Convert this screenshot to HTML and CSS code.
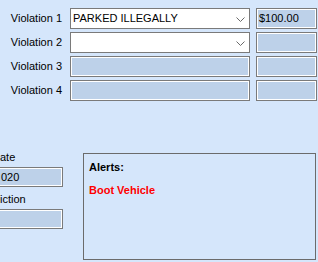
FILE: index.html
```html
<!DOCTYPE html>
<html>
<head>
<meta charset="utf-8">
<link rel="stylesheet" href="styles.css">
</head>
<body>
<div class="form">
  <div class="violations">
    <div class="row">
      <label class="lbl">Violation 1</label>
      <div class="combo"><span class="combo-text">PARKED ILLEGALLY</span>
        <svg class="chev" width="9" height="5" viewBox="0 0 9 5"><polyline points="0.5,0.5 4.5,4.5 8.5,0.5" fill="none" stroke="#6a6a6a" stroke-width="1"/></svg>
      </div>
      <div class="field amount">$100.00</div>
    </div>
    <div class="row">
      <label class="lbl">Violation 2</label>
      <div class="combo"><span class="combo-text"></span>
        <svg class="chev" width="9" height="5" viewBox="0 0 9 5"><polyline points="0.5,0.5 4.5,4.5 8.5,0.5" fill="none" stroke="#6a6a6a" stroke-width="1"/></svg>
      </div>
      <div class="field amount"></div>
    </div>
    <div class="row">
      <label class="lbl">Violation 3</label>
      <div class="field wide"></div>
      <div class="field amount"></div>
    </div>
    <div class="row">
      <label class="lbl">Violation 4</label>
      <div class="field wide"></div>
      <div class="field amount"></div>
    </div>
  </div>
  <div class="lower">
    <div class="left-col">
      <label class="side-lbl">ate</label>
      <div class="field side-field">020</div>
      <label class="side-lbl second">iction</label>
      <div class="field side-field"></div>
    </div>
    <div class="alerts">
      <div class="alerts-title">Alerts:</div>
      <div class="alert-item">Boot Vehicle</div>
    </div>
  </div>
</div>
</body>
</html>
```
FILE: styles.css
```css
html, body {
  margin: 0;
  padding: 0;
  background: #d5e6fb;
  overflow: hidden;
}
body {
  width: 318px;
  height: 262px;
  font-family: "Liberation Sans", Arial, sans-serif;
  font-size: 11px;
  color: #000;
}
.form {
  display: flex;
  flex-direction: column;
}
.violations {
  display: flex;
  flex-direction: column;
  gap: 3px;
  padding-top: 8px;
}
.row {
  display: flex;
  align-items: center;
  height: 21px;
}
.lbl {
  width: 62px;
  text-align: right;
  line-height: 13px;
  flex: none;
}
.combo {
  margin-left: 8px;
  width: 180px;
  height: 21px;
  box-sizing: border-box;
  border: 1px solid #7a7a7a;
  background: #fff;
  display: flex;
  align-items: center;
  padding-left: 2px;
  padding-right: 4px;
  flex: none;
}
.combo-text {
  flex: 1;
  line-height: 13px;
}
.chev {
  display: block;
  margin-top: 1px;
}
.field {
  height: 21px;
  box-sizing: border-box;
  border: 1px solid #7a7a7a;
  box-shadow: inset 0 0 0 1px #fff;
  background: #bdd1e9;
  display: flex;
  align-items: center;
  padding-left: 2px;
  line-height: 13px;
  flex: none;
  white-space: nowrap;
  overflow: hidden;
}
.wide {
  margin-left: 8px;
  width: 180px;
}
.amount {
  margin-left: 6px;
  width: 61px;
}
.lower {
  display: flex;
  margin-top: 50px;
}
.left-col {
  margin-left: -4px;
  width: 67px;
  display: flex;
  flex-direction: column;
  flex: none;
}
.side-lbl {
  line-height: 13px;
  white-space: nowrap;
  margin-bottom: 3px;
  padding-left: 4px;
}
.side-lbl.second {
  margin-top: 6px;
}
.side-field {
  width: 67px;
  height: 20px;
  padding-left: 4px;
}
.alerts {
  margin-left: 20px;
  margin-top: 2px;
  width: 233px;
  height: 107px;
  box-sizing: border-box;
  border: 1px solid #6b6b6b;
  padding: 7px 5px;
}
.alerts-title {
  font-weight: bold;
  line-height: 13px;
}
.alert-item {
  margin-top: 10px;
  font-weight: bold;
  color: #ff0000;
  line-height: 13px;
}
```
